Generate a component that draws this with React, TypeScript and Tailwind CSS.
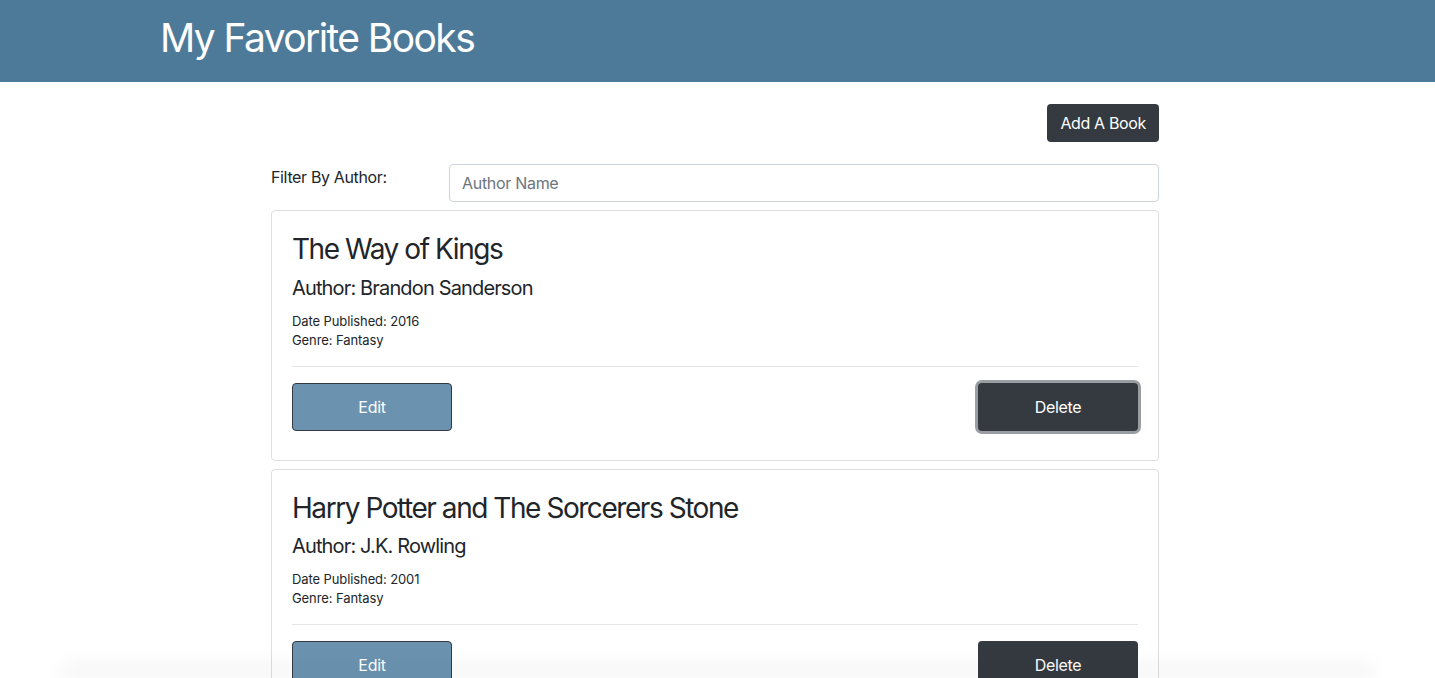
import React from "react";

interface Book {
  title: string;
  author: string;
  published: string;
  genre: string;
}

const books: Book[] = [
  { title: "The Way of Kings", author: "Brandon Sanderson", published: "2016", genre: "Fantasy" },
  { title: "Harry Potter and The Sorcerers Stone", author: "J.K. Rowling", published: "2001", genre: "Fantasy" },
];

function BookCard({ book, focused }: { book: Book; focused?: boolean }) {
  return (
    <div className="rounded border border-[#dfdfdf] bg-white px-5 pt-[22px] pb-[29px]">
      <h3 className="text-[28px] leading-[1.2] text-[#212529] tracking-[-1.45px] mb-[9px]">{book.title}</h3>
      <h5 className="text-[20px] leading-[1.2] text-[#212529] tracking-[-0.85px] mb-[12px]">
        Author: {book.author}
      </h5>
      <div className="text-[13px] leading-[19px] text-[#212529] tracking-[-0.1px]">
        <div>Date Published: {book.published}</div>
        <div>Genre: {book.genre}</div>
      </div>
      <hr className="mt-[16px] mb-4 border-t border-[#e5e5e5]" />
      <div className="flex items-center justify-between">
        <button className="h-12 w-40 rounded border border-[#343a40] bg-[#6b93b0] text-base text-white tracking-[-0.3px]">
          Edit
        </button>
        <button
          className={`h-12 w-40 rounded bg-[#343a40] text-base text-white tracking-[-0.3px] ${
            focused ? "ring-[3px] ring-[#9a9ea3]" : ""
          }`}
        >
          Delete
        </button>
      </div>
    </div>
  );
}

export default function App() {
  return (
    <div className="min-h-screen bg-white font-['Inter',_sans-serif] text-[#212529]">
      {/* Header */}
      <header className="h-[82px] bg-[#4e7a9a] flex items-center pl-[160px]">
        <h1 className="text-[39px] leading-none text-white tracking-[-1.6px] pb-[7px]">My Favorite Books</h1>
      </header>

      <main className="w-[888px] ml-[271px]">
        <div className="flex justify-end pt-[22px]">
          <button className="h-[38px] rounded bg-[#343a40] px-[13px] text-base text-white tracking-[-0.35px]">
            Add A Book
          </button>
        </div>

        {/* Filter */}
        <div className="mt-[22px] flex items-start">
          <label className="w-[178px] pt-[1px] text-base tracking-[-0.35px]">Filter By Author:</label>
          <input
            className="h-[38px] flex-1 rounded border border-[#ced4da] px-3 text-base tracking-[-0.3px] outline-none placeholder:text-[#6c757d]"
            placeholder="Author Name"
          />
        </div>

        <div className="mt-2 flex flex-col gap-2">
          {books.map((b, i) => (
            <BookCard key={b.title} book={b} focused={i === 0} />
          ))}
        </div>
      </main>

      {/* bottom window shadow */}
      <div className="pointer-events-none fixed bottom-0 left-[60px] right-[60px] h-[24px] rounded-t-[40px] bg-gradient-to-b from-transparent to-black/5 blur-sm" />
    </div>
  );
}
